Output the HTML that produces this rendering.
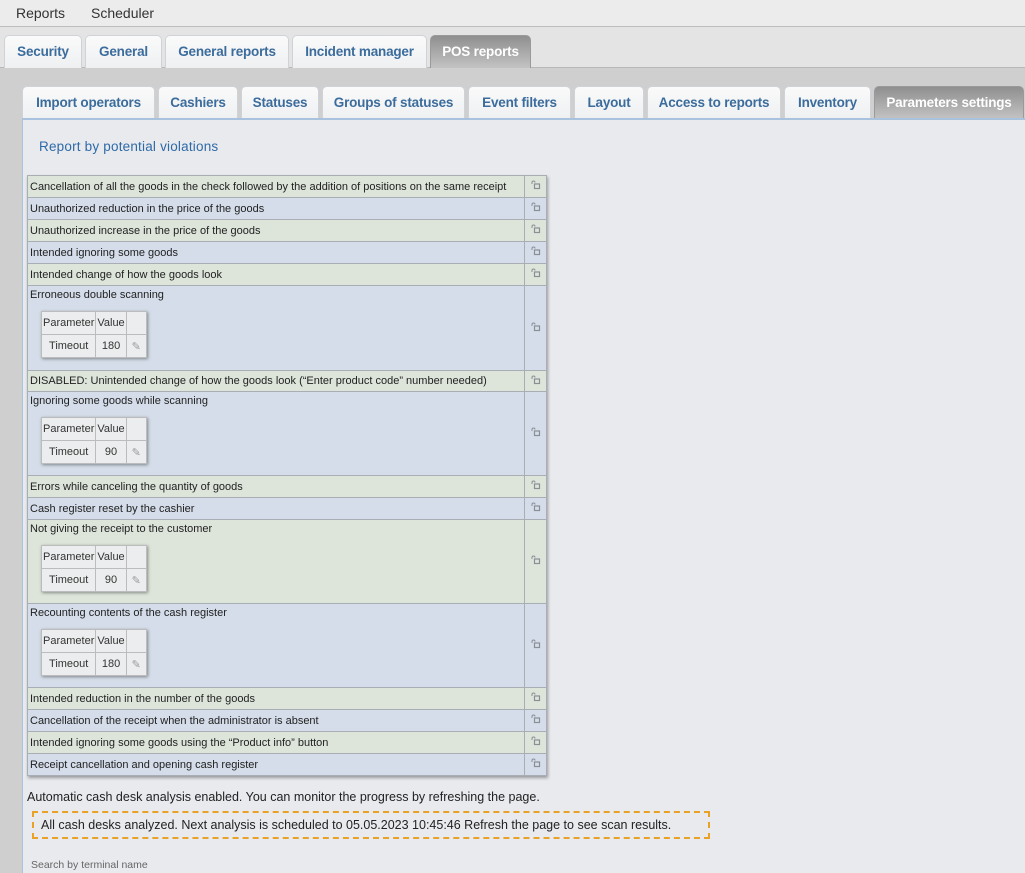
<!DOCTYPE html>
<html><head><style>
*{box-sizing:border-box;margin:0;padding:0}
body{width:1025px;height:873px;overflow:hidden;background:#e9e9e9;font-family:"Liberation Sans",sans-serif;position:relative}
.top{position:absolute;left:0;top:0;width:1025px;height:27px;background:#ececec;border-bottom:1px solid #bdbdbd;font-size:14px;color:#333}
.top span{position:absolute;top:5px}
.band1{position:absolute;left:0;top:27px;width:1025px;height:41px;background:#e4e4e4}
.outer{position:absolute;left:0;top:67px;width:1025px;height:806px;background:#cfcfcf;border-top:1px solid #b8b8b8}
.tab{position:absolute;height:33px;background:linear-gradient(#fafafa,#eef0f2);border:1px solid #cfd3d8;border-bottom:none;border-radius:5px 5px 0 0;color:#3b6c9c;font-weight:bold;font-size:13.5px;text-align:center;line-height:31px;letter-spacing:-.2px}
.tab.act{background:linear-gradient(#8f8f8f,#c3c3c3);color:#fff;border-color:#9a9a9a}
.panel{position:absolute;left:22px;top:118px;width:1003px;height:755px;background:#e8eaee;border-left:1px solid #a9c2de;border-top:2px solid #a9c2de}
h2{position:absolute;left:39px;top:139px;font-size:13.5px;font-weight:normal;color:#2e6aa8;letter-spacing:.2px}
table.m{position:absolute;left:27px;top:175px;width:520px;border-collapse:collapse;font-size:11px;color:#222;box-shadow:1px 2px 3px rgba(0,0,0,.35)}
table.m td{border:1px solid #a9aeb4;padding:0 2px;vertical-align:middle}
table.m td.l{width:22px;text-align:center}
.g{background:#dde5db}.b{background:#d4dde9}
.big td.t{vertical-align:top;padding-top:3px}
table.p{margin:10px 0 0 11px;border-collapse:collapse;font-size:11px;box-shadow:1px 1px 3px rgba(0,0,0,.4);background:#ecedee}
table.p td{border:1px solid #bcbcbc;height:23px;padding:0 1px;text-align:center;color:#333;vertical-align:middle}
.note{position:absolute;left:27px;top:790px;font-size:12.5px;color:#222}
.dash{position:absolute;left:32px;top:811px;width:678px;height:28px;border:2px dashed #e9a225;font-size:12.5px;color:#222;padding:5px 0 0 7px}
.search{position:absolute;left:31px;top:859px;font-size:10.5px;color:#666}
</style></head><body>
<svg width="0" height="0" style="position:absolute"><defs><symbol id="lk" viewBox="0 0 10 10"><path d="M1 4V2.5a1.5 1.5 0 0 1 3 0" fill="none" stroke="#8a8f96" stroke-width="1"/><rect x="3.5" y="4" width="5" height="4.5" fill="none" stroke="#8a8f96" stroke-width="1.2"/></symbol></defs></svg>
<div class="top"><span style="left:16px">Reports</span><span style="left:91px">Scheduler</span></div>
<div class="band1"></div>
<div class="outer"></div>
<div class="tab" style="left:4px;top:35px;width:78px">Security</div>
<div class="tab" style="left:85px;top:35px;width:77px">General</div>
<div class="tab" style="left:165px;top:35px;width:124px">General reports</div>
<div class="tab" style="left:292px;top:35px;width:135px">Incident manager</div>
<div class="tab act" style="left:430px;top:35px;width:101px">POS reports</div>
<div class="tab" style="left:22px;top:86px;width:133px">Import operators</div>
<div class="tab" style="left:158px;top:86px;width:80px">Cashiers</div>
<div class="tab" style="left:241px;top:86px;width:78px">Statuses</div>
<div class="tab" style="left:322px;top:86px;width:143px">Groups of statuses</div>
<div class="tab" style="left:468px;top:86px;width:103px">Event filters</div>
<div class="tab" style="left:574px;top:86px;width:70px">Layout</div>
<div class="tab" style="left:647px;top:86px;width:134px">Access to reports</div>
<div class="tab" style="left:784px;top:86px;width:87px">Inventory</div>
<div class="tab act" style="left:874px;top:86px;width:150px">Parameters settings</div>
<div class="panel"></div>
<h2>Report by potential violations</h2>
<table class="m">
<tr class="g" style="height:22px"><td>Cancellation of all the goods in the check followed by the addition of positions on the same receipt</td><td class="l"><svg width="10" height="10"><use href="#lk"/></svg></td></tr>
<tr class="b" style="height:22px"><td>Unauthorized reduction in the price of the goods</td><td class="l"><svg width="10" height="10"><use href="#lk"/></svg></td></tr>
<tr class="g" style="height:22px"><td>Unauthorized increase in the price of the goods</td><td class="l"><svg width="10" height="10"><use href="#lk"/></svg></td></tr>
<tr class="b" style="height:22px"><td>Intended ignoring some goods</td><td class="l"><svg width="10" height="10"><use href="#lk"/></svg></td></tr>
<tr class="g" style="height:22px"><td>Intended change of how the goods look</td><td class="l"><svg width="10" height="10"><use href="#lk"/></svg></td></tr>
<tr class="b big" style="height:85px"><td class="t">Erroneous double scanning<table class="p"><tr><td>Parameter</td><td>Value</td><td style="width:20px"></td></tr><tr><td style="width:54px">Timeout</td><td>180</td><td style="color:#999">✎</td></tr></table></td><td class="l"><svg width="10" height="10"><use href="#lk"/></svg></td></tr>
<tr class="g" style="height:21px"><td>DISABLED: Unintended change of how the goods look (“Enter product code” number needed)</td><td class="l"><svg width="10" height="10"><use href="#lk"/></svg></td></tr>
<tr class="b big" style="height:84px"><td class="t">Ignoring some goods while scanning<table class="p"><tr><td>Parameter</td><td>Value</td><td style="width:20px"></td></tr><tr><td style="width:54px">Timeout</td><td>90</td><td style="color:#999">✎</td></tr></table></td><td class="l"><svg width="10" height="10"><use href="#lk"/></svg></td></tr>
<tr class="g" style="height:22px"><td>Errors while canceling the quantity of goods</td><td class="l"><svg width="10" height="10"><use href="#lk"/></svg></td></tr>
<tr class="b" style="height:22px"><td>Cash register reset by the cashier</td><td class="l"><svg width="10" height="10"><use href="#lk"/></svg></td></tr>
<tr class="g big" style="height:84px"><td class="t">Not giving the receipt to the customer<table class="p"><tr><td>Parameter</td><td>Value</td><td style="width:20px"></td></tr><tr><td style="width:54px">Timeout</td><td>90</td><td style="color:#999">✎</td></tr></table></td><td class="l"><svg width="10" height="10"><use href="#lk"/></svg></td></tr>
<tr class="b big" style="height:84px"><td class="t">Recounting contents of the cash register<table class="p"><tr><td>Parameter</td><td>Value</td><td style="width:20px"></td></tr><tr><td style="width:54px">Timeout</td><td>180</td><td style="color:#999">✎</td></tr></table></td><td class="l"><svg width="10" height="10"><use href="#lk"/></svg></td></tr>
<tr class="g" style="height:22px"><td>Intended reduction in the number of the goods</td><td class="l"><svg width="10" height="10"><use href="#lk"/></svg></td></tr>
<tr class="b" style="height:22px"><td>Cancellation of the receipt when the administrator is absent</td><td class="l"><svg width="10" height="10"><use href="#lk"/></svg></td></tr>
<tr class="g" style="height:22px"><td>Intended ignoring some goods using the “Product info” button</td><td class="l"><svg width="10" height="10"><use href="#lk"/></svg></td></tr>
<tr class="b" style="height:22px"><td>Receipt cancellation and opening cash register</td><td class="l"><svg width="10" height="10"><use href="#lk"/></svg></td></tr>
</table>
<div class="note">Automatic cash desk analysis enabled. You can monitor the progress by refreshing the page.</div>
<div class="dash">All cash desks analyzed. Next analysis is scheduled to 05.05.2023 10:45:46 Refresh the page to see scan results.</div>
<div class="search">Search by terminal name</div>
</body></html>
